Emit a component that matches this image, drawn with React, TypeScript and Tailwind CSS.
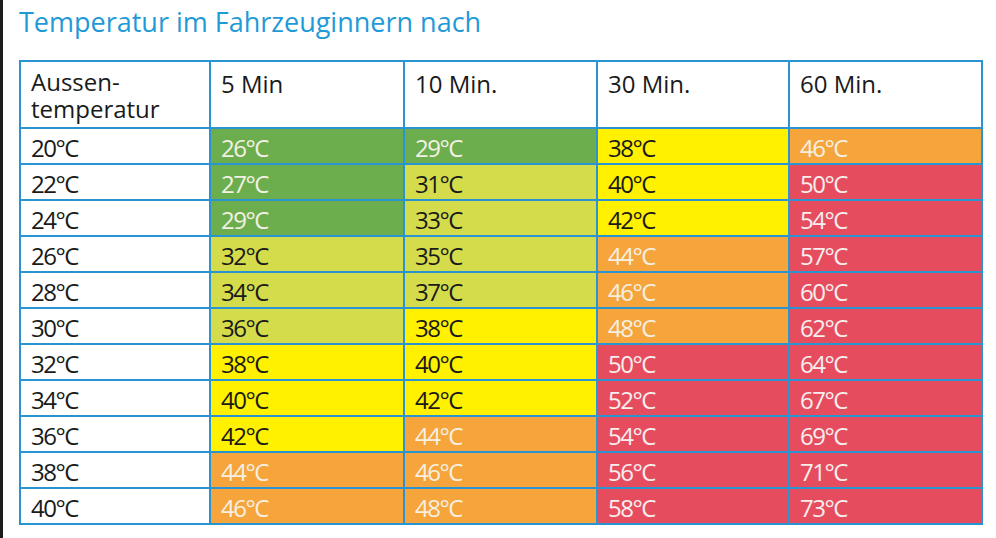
const headers = ["5 Min", "10 Min.", "30 Min.", "60 Min."];

// g = green, l = lime, y = yellow, o = orange, r = red
const rows: [string, [string, string][]][] = [
  ["20°C", [["26°C", "g"], ["29°C", "g"], ["38°C", "y"], ["46°C", "o"]]],
  ["22°C", [["27°C", "g"], ["31°C", "l"], ["40°C", "y"], ["50°C", "r"]]],
  ["24°C", [["29°C", "g"], ["33°C", "l"], ["42°C", "y"], ["54°C", "r"]]],
  ["26°C", [["32°C", "l"], ["35°C", "l"], ["44°C", "o"], ["57°C", "r"]]],
  ["28°C", [["34°C", "l"], ["37°C", "l"], ["46°C", "o"], ["60°C", "r"]]],
  ["30°C", [["36°C", "l"], ["38°C", "y"], ["48°C", "o"], ["62°C", "r"]]],
  ["32°C", [["38°C", "y"], ["40°C", "y"], ["50°C", "r"], ["64°C", "r"]]],
  ["34°C", [["40°C", "y"], ["42°C", "y"], ["52°C", "r"], ["67°C", "r"]]],
  ["36°C", [["42°C", "y"], ["44°C", "o"], ["54°C", "r"], ["69°C", "r"]]],
  ["38°C", [["44°C", "o"], ["46°C", "o"], ["56°C", "r"], ["71°C", "r"]]],
  ["40°C", [["46°C", "o"], ["48°C", "o"], ["58°C", "r"], ["73°C", "r"]]],
];

const tone: Record<string, string> = {
  g: "bg-[#6cae4e] text-[#f3f1e4]",
  l: "bg-[#d5dc4c] text-[#1a1a1a]",
  y: "bg-[#fff100] text-[#1a1a1a]",
  o: "bg-[#f5a53c] text-[#f7f0e2]",
  r: "bg-[#e54d5f] text-[#f7eeee]",
};

export default function App() {
  return (
    <div
      className="w-[996px] h-[538px] bg-white border-l-[3px] border-[#1c1c1c] overflow-hidden"
      style={{ fontFamily: '"Open Sans", sans-serif' }}
    >
      <h1 className="ml-[16px] mt-[8px] text-[27px] leading-[28px] text-[#1f9ad7]">
        Temperatur im Fahrzeuginnern nach
      </h1>
      <div className="ml-[16px] mt-[24px] w-[964px] bg-[#2a93d2] p-[2px] grid grid-cols-[188px_192px_191px_190px_191px] gap-[2px] text-[24px] leading-[25px] text-[#1a1a1a]">
        <div className="bg-white h-[65px] pl-[10px] pt-[6px] leading-[27px]">
          <div>Aussen-</div>
          <div>temperatur</div>
        </div>
        {headers.map((h) => (
          <div key={h} className="bg-white h-[65px] pl-[10px] pt-[9px]">
            {h}
          </div>
        ))}
        {rows.map(([outside, cells]) => (
          <>
            <div key={outside} className="bg-white h-[34px] pl-[10px] flex items-center pt-[3px] tracking-[-1.5px]">
              {outside}
            </div>
            {cells.map(([v, t], i) => (
              <div
                key={outside + i}
                className={`h-[34px] pl-[10px] flex items-center pt-[3px] tracking-[-1.5px] ${tone[t]}`}
              >
                {v}
              </div>
            ))}
          </>
        ))}
      </div>
    </div>
  );
}
